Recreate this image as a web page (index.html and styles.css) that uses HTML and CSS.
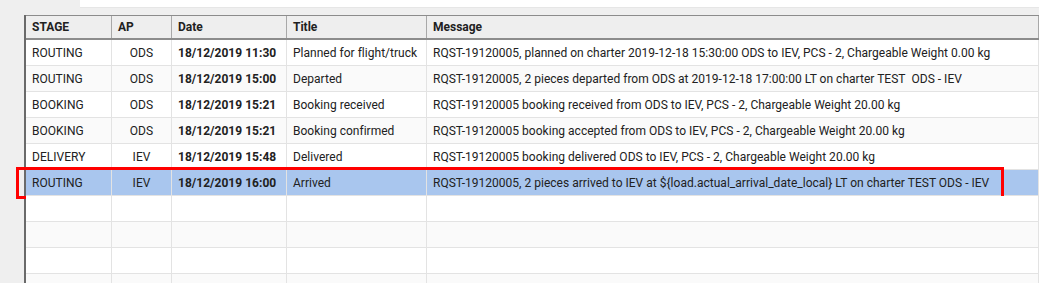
FILE: index.html
```html
<!DOCTYPE html>
<html>
<head>
<meta charset="utf-8">
<link rel="stylesheet" href="styles.css">
</head>
<body>
<div class="topbar"></div>
<div class="grid">
  <div class="row head">
    <div class="cell">STAGE</div>
    <div class="cell">AP</div>
    <div class="cell">Date</div>
    <div class="cell">Title</div>
    <div class="cell">Message</div>
  </div>
  <div class="row">
    <div class="cell">ROUTING</div>
    <div class="cell center">ODS</div>
    <div class="cell bold">18/12/2019 11:30</div>
    <div class="cell">Planned for flight/truck</div>
    <div class="cell">RQST-19120005, planned on charter 2019-12-18 15:30:00 ODS to IEV, PCS - 2, Chargeable Weight 0.00 kg</div>
  </div>
  <div class="row alt">
    <div class="cell">ROUTING</div>
    <div class="cell center">ODS</div>
    <div class="cell bold">18/12/2019 15:00</div>
    <div class="cell">Departed</div>
    <div class="cell">RQST-19120005, 2 pieces departed from ODS at 2019-12-18 17:00:00 LT on charter TEST&nbsp; ODS - IEV</div>
  </div>
  <div class="row">
    <div class="cell">BOOKING</div>
    <div class="cell center">ODS</div>
    <div class="cell bold">18/12/2019 15:21</div>
    <div class="cell">Booking received</div>
    <div class="cell">RQST-19120005 booking received from ODS to IEV, PCS - 2, Chargeable Weight 20.00 kg</div>
  </div>
  <div class="row alt">
    <div class="cell">BOOKING</div>
    <div class="cell center">ODS</div>
    <div class="cell bold">18/12/2019 15:21</div>
    <div class="cell">Booking confirmed</div>
    <div class="cell">RQST-19120005 booking accepted from ODS to IEV, PCS - 2, Chargeable Weight 20.00 kg</div>
  </div>
  <div class="row">
    <div class="cell">DELIVERY</div>
    <div class="cell center">IEV</div>
    <div class="cell bold">18/12/2019 15:48</div>
    <div class="cell">Delivered</div>
    <div class="cell">RQST-19120005 booking delivered ODS to IEV, PCS - 2, Chargeable Weight 20.00 kg</div>
  </div>
  <div class="row selected">
    <div class="cell">ROUTING</div>
    <div class="cell center">IEV</div>
    <div class="cell bold">18/12/2019 16:00</div>
    <div class="cell">Arrived</div>
    <div class="cell">RQST-19120005, 2 pieces arrived to IEV at ${load.actual_arrival_date_local} LT on charter TEST ODS - IEV</div>
    <div class="marker"></div>
  </div>
  <div class="row"><div class="cell"></div><div class="cell"></div><div class="cell"></div><div class="cell"></div><div class="cell"></div></div>
  <div class="row alt"><div class="cell"></div><div class="cell"></div><div class="cell"></div><div class="cell"></div><div class="cell"></div></div>
  <div class="row"><div class="cell"></div><div class="cell"></div><div class="cell"></div><div class="cell"></div><div class="cell"></div></div>
  <div class="row alt"><div class="cell"></div><div class="cell"></div><div class="cell"></div><div class="cell"></div><div class="cell"></div></div>
</div>
</body>
</html>
```

FILE: styles.css
```css
html, body {
  margin: 0;
  padding: 0;
  background: #efefef;
  font-family: Roboto, "Liberation Sans", sans-serif;
  font-size: 12px;
  color: #212121;
  overflow: hidden;
}

.topbar {
  margin-left: 80px;
  height: 7px;
  background: #ffffff;
  border-bottom: 1px solid #e6e6e6;
}

.grid {
  margin-top: 7px;
  margin-left: 24px;
  border-left: 2px solid #6a6a6a;
  background: #ffffff;
}

.row {
  position: relative;
  display: grid;
  grid-template-columns: 86px 60px 115px 140px 1fr;
  height: 26px;
  border-bottom: 1px solid #e3e3e3;
  box-sizing: border-box;
  background: #ffffff;
  letter-spacing: 0.02px;
}

.row.alt {
  background: #fafafa;
}

.row.selected {
  background: #a9c6ee;
}

.row.head {
  height: 25px;
  background: #eeeeee;
  border-top: 1px solid #8c8c8c;
  border-bottom: 2px solid #8c8c8c;
  font-weight: bold;
  letter-spacing: 0;
}

.cell {
  display: flex;
  align-items: center;
  padding: 0 6px;
  border-right: 1px solid #e3e3e3;
  white-space: nowrap;
  overflow: hidden;
  min-width: 0;
}

.head .cell {
  border-right-color: #a8a8a8;
}

.cell.center {
  justify-content: center;
}

.cell.bold {
  font-weight: bold;
}

.marker {
  position: absolute;
  left: -10px;
  top: -3px;
  width: 988px;
  height: 32px;
  border: 3px solid #ff0000;
  box-sizing: border-box;
  pointer-events: none;
}
```
